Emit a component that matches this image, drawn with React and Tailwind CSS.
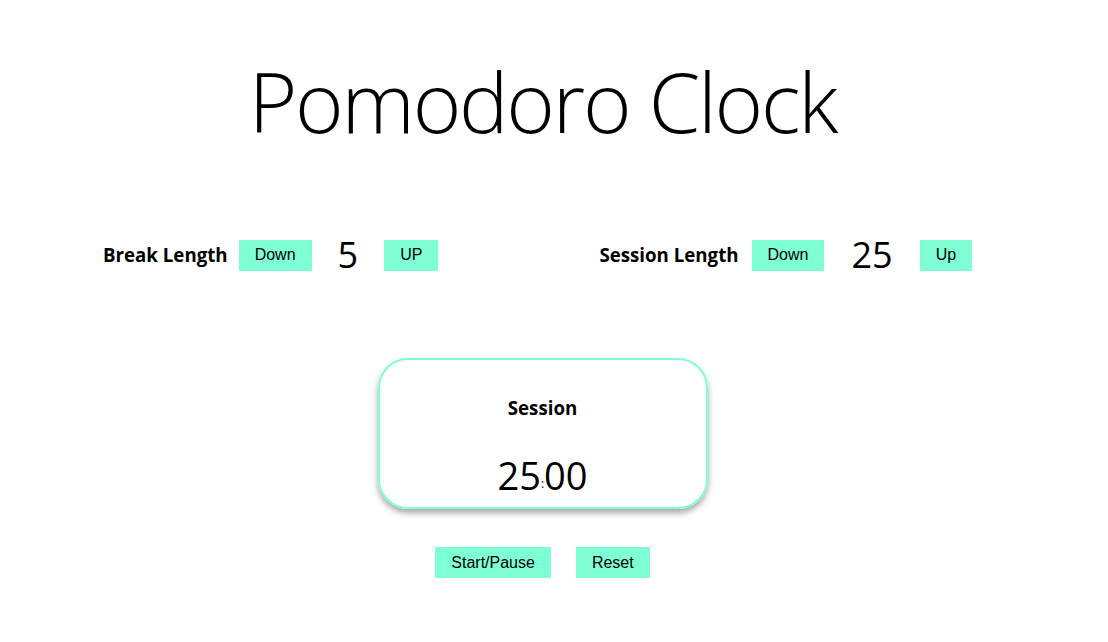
export default function App() {
  const sans = { fontFamily: '"Open Sans", "Noto Sans", sans-serif' };
  const btn =
    "h-[31px] px-4 bg-[#7fffd4] text-black text-[16px] font-['Liberation_Sans',Arial,sans-serif] leading-none";

  return (
    <div className="w-[1108px] h-[642px] bg-white text-black" style={sans}>
      <div className="w-[1085px]">
        <h1 className="pt-[49px] text-center text-[83px] font-light leading-[104px] tracking-[-2.2px]">
          Pomodoro Clock
        </h1>

        <div className="mt-[84px] flex items-center pl-[103px]">
          <div className="flex items-center">
            <span className="text-[18.7px] font-bold mr-[11px]">Break Length</span>
            <button className={btn}>Down</button>
            <span className="mx-[26px] text-[36px] leading-none">5</span>
            <button className={btn}>UP</button>
          </div>
          <div className="flex items-center ml-[161px]">
            <span className="text-[18.7px] font-bold mr-[13px]">Session Length</span>
            <button className={btn}>Down</button>
            <span className="mx-[27px] text-[36px] leading-none">25</span>
            <button className={btn}>Up</button>
          </div>
        </div>

        <div className="mt-[85px] flex justify-center">
          <div className="w-[330px] h-[151px] rounded-[30px] border-2 border-[#7fffd4] shadow-[0_4px_6px_rgba(0,0,0,0.35)] flex flex-col items-center">
            <div className="mt-[34px] text-[18.7px] font-bold">Session</div>
            <div className="mt-[34px] text-[38px] leading-none flex items-end">
              <span>25</span>
              <span className="text-[12px] mb-[4px]">:</span>
              <span>00</span>
            </div>
          </div>
        </div>

        <div className="mt-[38px] flex justify-center gap-[25px]">
          <button className={btn}>Start/Pause</button>
          <button className={btn}>Reset</button>
        </div>
      </div>
    </div>
  );
}
